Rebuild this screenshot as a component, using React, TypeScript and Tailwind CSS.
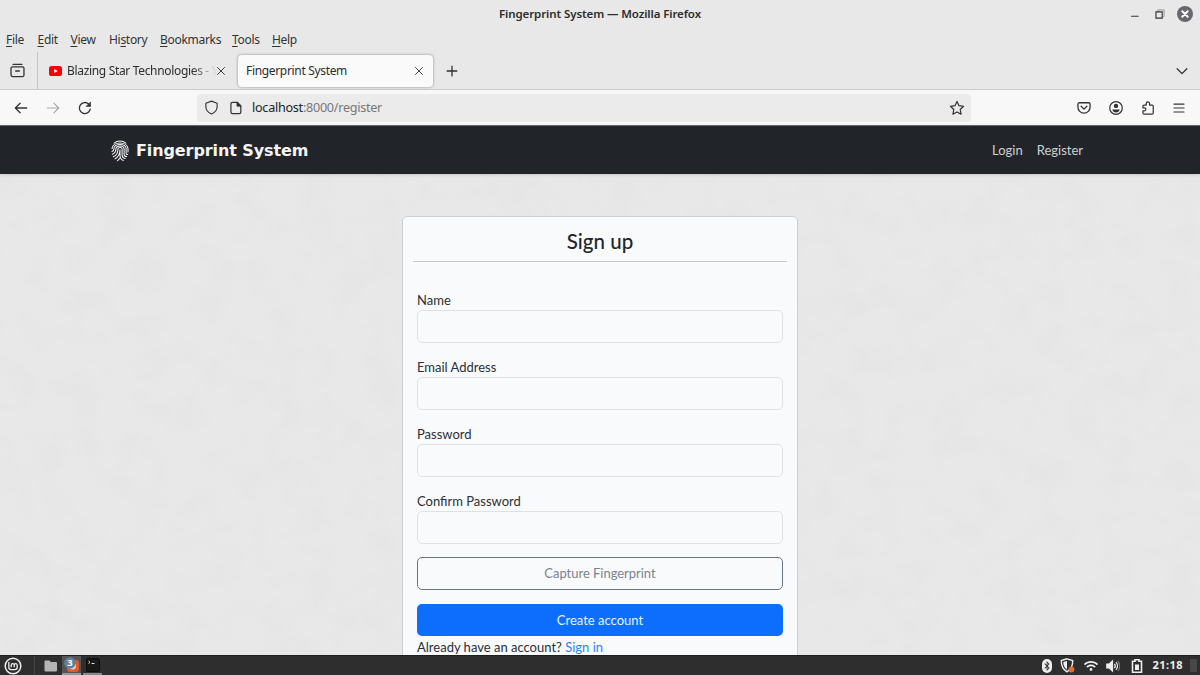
import type { ReactNode } from "react";
import { FaBluetoothB, FaWifi } from "react-icons/fa";

interface IconProps {
  size?: number;
  className?: string;
  children: ReactNode;
}

const Icon = ({ size = 16, className = "", children }: IconProps) => (
  <svg
    width={size}
    height={size}
    viewBox="0 0 16 16"
    fill="none"
    stroke="currentColor"
    strokeWidth="1.2"
    strokeLinecap="round"
    strokeLinejoin="round"
    className={`shrink-0 ${className}`}
  >
    {children}
  </svg>
);

const menuItems = [
  { before: "", key: "F", after: "ile", width: "w-[31.5px]" },
  { before: "", key: "E", after: "dit", width: "w-[33px]" },
  { before: "", key: "V", after: "iew", width: "w-[38.5px]" },
  { before: "Hi", key: "s", after: "tory", width: "w-[51px]" },
  { before: "", key: "B", after: "ookmarks", width: "w-[72px]" },
  { before: "", key: "T", after: "ools", width: "w-[40px]" },
  { before: "", key: "H", after: "elp", width: "w-[40px]" },
];

const TitleBar = () => (
  <div className="grid h-7 grid-cols-[1fr_auto_1fr] items-center">
    <span />
    <h1 className="text-[11.5px] font-semibold tracking-[-0.1px] text-[#2c2c2c]">
      Fingerprint System — Mozilla Firefox
    </h1>
    <div className="flex items-center justify-end gap-[13px] pr-[7px] text-[#333]">
      <Icon size={10}>
        <path d="M2.5 11.5h10.5" strokeWidth="1.8" />
      </Icon>
      <Icon size={10} className="ml-[2px]">
        <path d="M4.5 4V1.500h10V12H12" stroke="#999" strokeWidth="1.6" />
        <path d="M1.500 4.500h10v10h-10z" strokeWidth="1.8" strokeLinejoin="miter" />
      </Icon>
      <Icon size={16} className="-ml-px">
        <circle cx="8" cy="8" r="8" fill="#69696d" stroke="none" />
        <path d="M5.300 5.300l5.400 5.400M10.700 5.300l-5.400 5.400" stroke="white" strokeWidth="2" />
      </Icon>
    </div>
  </div>
);

const MenuBar = () => (
  <div className="flex h-6 items-center pl-[6px] text-[12px] text-[#333]">
    {menuItems.map((item) => (
      <span key={item.key + item.after} className={`whitespace-nowrap tracking-[-0.3px] ${item.width}`}>
        {item.before}
        <span className="underline underline-offset-2">{item.key}</span>
        {item.after}
      </span>
    ))}
  </div>
);

const CloseIcon = () => (
  <Icon size={8}>
    <path d="M1 1l14 14M15 1L1 15" strokeWidth="1.8" />
  </Icon>
);

const TabBar = () => (
  <div className="flex h-[38px] items-center border-b border-[#ccc] text-[12px] text-[#2d2d2d]">
    <div className="flex h-full w-[38px] items-center justify-center border-r border-[#c4c4c4] pr-[2px]">
      <Icon size={15} className="text-[#333]">
        <path d="M3.300 1.500h9.400M2.700 4.100h10.600a1.600 1.600 0 0 1 1.600 1.600v7.200a1.600 1.600 0 0 1-1.600 1.600H2.700a1.600 1.600 0 0 1-1.600-1.600V5.700a1.600 1.600 0 0 1 1.600-1.600zM6 8.500h4" strokeWidth="1.400" />
      </Icon>
    </div>
    <div className="flex h-full w-[200px] items-center pl-[11px]">
      <svg width="13" height="10" viewBox="0 0 13 10" className="shrink-0">
        <rect width="13" height="10" rx="2.600" fill="#f00" />
        <path d="M5.200 2.900v4.200L8.800 5z" fill="#fff" />
      </svg>
      <span className="ml-[5px] w-[150px] shrink-0 whitespace-nowrap tracking-[-0.33px] [mask-image:linear-gradient(to_right,black_125px,transparent_150px)]">
        Blazing Star Technologies - Y
      </span>
      <span>
        <CloseIcon />
      </span>
    </div>
    <div className="flex h-[32px] w-[195px] items-center justify-between rounded-[4px] bg-[#fafafa] pl-[8px] pr-[10px] shadow-[0_0_3px_rgba(0,0,0,0.4)]">
      <span className="tracking-[-0.33px]">Fingerprint System</span>
      <CloseIcon />
    </div>
    <Icon size={12} className="ml-[13px]">
      <path d="M8 1.500v13M1.500 8h13" strokeWidth="1.700" />
    </Icon>
    <Icon size={12} className="ml-auto mr-[12px]">
      <path d="M1.500 5L8 11.500 14.500 5" strokeWidth="1.600" />
    </Icon>
  </div>
);

const Toolbar = () => (
  <div className="flex h-[35px] items-center bg-[#f8f8f8] text-[#333]">
    <Icon size={14} className="ml-[14px]">
      <path d="M14.500 8h-13M7 2.500L1.500 8 7 13.500" strokeWidth="1.500" />
    </Icon>
    <Icon size={14} className="ml-[18px] text-[#aaa]">
      <path d="M1.500 8h13M9 2.500L14.500 8 9 13.500" strokeWidth="1.400" />
    </Icon>
    <Icon size={14} className="ml-[18px]">
      <path d="M14 9.400A6.300 6.300 0 1 1 12.200 3.500" strokeWidth="1.500" />
      <path d="M14.300 1.500v4.700H9.600z" fill="currentColor" strokeWidth=".8" />
    </Icon>
    <div className="ml-[105px] flex h-[28px] w-[774px] items-center rounded-[4px] bg-[#ebebeb] pl-[7px] pr-[6px]">
      <Icon size={15}>
        <path d="M8 1.200l6 2.200v3.800c0 3.800-3 6.400-6 7.700-3-1.300-6-3.900-6-7.700V3.400z" />
      </Icon>
      <Icon size={14} className="ml-[10px]">
        <path d="M3.800 1.500h5.700l4 4v7.400a1.600 1.600 0 0 1-1.600 1.600H3.800a1.600 1.600 0 0 1-1.600-1.600V3.100a1.600 1.600 0 0 1 1.600-1.600zM9.500 1.500v4h4z" strokeWidth="1.400" />
        <path d="M9.500 1.500v4h4z" fill="currentColor" />
      </Icon>
      <span className="ml-[9px] pt-px text-[12.6px] tracking-[-0.26px] text-[#222]">
        localhost<span className="text-[#777]">:8000/register</span>
      </span>
      <Icon size={16} className="ml-auto">
        <path d="M8 1.400l2 4.300 4.600.6-3.400 3.200.9 4.700L8 11.900l-4.100 2.300.9-4.700L1.400 6.300 6 5.700z" />
      </Icon>
    </div>
    <div className="ml-auto flex items-center gap-[18px] pr-[15px]">
      <Icon size={14}>
        <path d="M2.600 2h10.800a1.500 1.500 0 0 1 1.500 1.500V7a6.900 6.900 0 0 1-13.800 0V3.500A1.500 1.500 0 0 1 2.600 2zM4.700 6L8 9.300 11.300 6" strokeWidth="1.500" />
      </Icon>
      <Icon size={14}>
        <circle cx="8" cy="8" r="7.200" strokeWidth="1.400" />
        <circle cx="8" cy="5.600" r="2.500" fill="currentColor" stroke="none" />
        <path d="M3.700 9.600h8.600c-.6 2.200-2.200 3.400-4.300 3.400s-3.700-1.200-4.300-3.400z" fill="currentColor" stroke="none" />
      </Icon>
      <Icon size={14}>
        <path d="M3.500 15h9.200a1.300 1.300 0 0 0 1.300-1.300V6a1.300 1.300 0 0 0-1.300-1.300H9.800V2.900a1.900 1.900 0 0 0-3.800 0v1.800H3.500a1.300 1.300 0 0 0-1.300 1.300v1.800h1.700a1.700 1.700 0 0 1 0 3.400H2.200v2.500A1.300 1.300 0 0 0 3.500 15z" strokeWidth="1.400" />
      </Icon>
      <Icon size={12}>
        <path d="M1.300 2.700h13.400M1.300 8h13.400M1.300 13.300h13.400" strokeWidth="1.600" />
      </Icon>
    </div>
  </div>
);

const FingerprintLogo = () => (
  <svg
    width="18"
    height="22"
    viewBox="0 0 18 22"
    fill="none"
    stroke="#f4f4f4"
    strokeWidth="1.05"
    strokeLinecap="round"
    className="mt-px shrink-0"
  >
    <path d="M3.200 3.200C6.400.3 11.600.3 14.800 3.200" />
    <path d="M1 8.600C1.500 1 16.500 1 17 8.600V12" />
    <path d="M1 11.600c1.300-.6 1.900-1.400 1.900-2.900C2.900 3 15.100 3 15.100 8.700v4.800c0 .8.500 1 1.600 1" />
    <path d="M1.300 14.200C3.700 13.300 4.900 11.600 4.900 9 4.900 5 13.100 5 13.100 9v5.400c0 1.400.8 2 2.600 2.100" />
    <path d="M2.300 16.700C5.200 15.400 6.900 13 6.900 9.400c0-2.600 4.200-2.600 4.200 0v5.500c0 2 1.200 3.200 3.100 3.500" />
    <path d="M4 18.900c3.200-1.800 5-4.800 5-9.300v5.900c0 2.400 1.200 4.100 3.300 4.900" />
    <path d="M6.400 20.800c1.100-.8 1.900-1.600 2.500-2.700" />
  </svg>
);

const Navbar = () => (
  <nav className="relative flex h-[49px] items-center border-t border-[#62676b] bg-[#212529] pl-[111px] pr-[117px] shadow-[0_1px_3px_rgba(0,0,0,0.15)]">
    <FingerprintLogo />
    <span className="ml-[7px] pt-px font-['DejaVu_Sans'] text-[16px] font-bold tracking-[-0.1px] text-[#f4f4f4]">
      Fingerprint System
    </span>
    <div className="ml-auto flex gap-[14px] pt-px text-[13px] text-[#cfd0d1]">
      <a href="#login">Login</a>
      <a href="#register">Register</a>
    </div>
  </nav>
);

const PaperTexture = () => (
  <svg className="absolute inset-0 h-full w-full" aria-hidden="true">
    <filter id="paper" x="0" y="0" width="100%" height="100%">
      <feTurbulence type="fractalNoise" baseFrequency="0.03 0.035" numOctaves="3" seed="4" />
      <feColorMatrix values="0 0 0 0 0.35  0 0 0 0 0.35  0 0 0 0 0.35  0.09 0 0 0 -0.039" />
    </filter>
    <rect width="100%" height="100%" filter="url(#paper)" />
  </svg>
);

const fields = ["Name", "Email Address", "Password", "Confirm Password"];

const SignUpCard = () => (
  <div className="relative h-[500px] w-[396px] rounded-[5px] border border-[#cdcfd2] bg-[#f9fafc] px-[10px] text-[#2b3035]">
    <h2 className="flex h-[45px] items-center justify-center border-b border-[#c8cacd] pt-[5px] text-[20.5px] font-medium text-[#212529]">
      Sign up
    </h2>
    <form className="px-[4px] pt-[28px] text-[13px]">
      {fields.map((field) => (
        <label key={field} className="mb-[14.500px] block">
          <span className="block h-[20px] leading-[20px]">{field}</span>
          <input className="block h-[32.500px] w-full rounded-[5px] border border-[#dee2e6] bg-[#f8fafc]" />
        </label>
      ))}
      <button
        type="button"
        className="-mt-px block h-[33px] w-full rounded-[5px] border border-[#6c757d] pt-px tracking-[-0.03px] text-[#7b838a]"
      >
        Capture Fingerprint
      </button>
      <button
        type="button"
        className="mt-[14px] block h-[32px] w-full rounded-[5px] bg-[#0d6efd] pt-px text-[#e8f1ff]"
      >
        Create account
      </button>
      <p className="leading-[22px]">
        Already have an account?{" "}
        <a href="#login" className="text-[#2f80f5]">
          Sign in
        </a>
      </p>
    </form>
  </div>
);

const Taskbar = () => (
  <div className="flex h-[20px] items-center border-t border-[#1e1e1e] bg-[#2e2e2e] text-[#eee]">
    <svg width="18" height="18" viewBox="0 0 18 18" fill="none" stroke="currentColor" className="ml-[4px]">
      <circle cx="9" cy="9" r="7.800" strokeWidth="1.500" />
      <path d="M4.800 5v5.200a2.400 2.400 0 0 0 2.400 2.400h3.600a2.400 2.400 0 0 0 2.400-2.400V8.200a1.500 1.500 0 0 0-3 0v2M10.200 8.200a1.500 1.500 0 0 0-3 0v2" strokeWidth="1.300" />
    </svg>
    <span className="ml-[12px] h-full w-px bg-[#444]" />
    <svg width="14" height="12" viewBox="0 0 14 12" className="ml-[9px]">
      <path d="M1 .5h4.500l1.200 1.600H12a1 1 0 0 1 1 1V10.500a1 1 0 0 1-1 1H1.500a1 1 0 0 1-1-1V1z" fill="#b4b4b4" />
    </svg>
    <div className="ml-[4px] flex h-full w-[19px] items-center justify-center border-b-2 border-[#999] bg-[#555]">
      <svg width="15" height="16" viewBox="0 0 15 16">
        <rect x="3" y="3" width="12" height="12" rx="3" fill="#e2592b" />
        <circle cx="8.500" cy="9" r="3.500" fill="#f2d9c8" />
        <circle cx="6" cy="6" r="5.800" fill="#62809e" />
        <text x="6" y="9.300" textAnchor="middle" fontSize="9.500" fontWeight="700" fill="#fff">
          3
        </text>
      </svg>
    </div>
    <div className="ml-[2px] flex h-full w-[19px] items-center justify-center border-b-2 border-[#888]">
      <svg width="14" height="14" viewBox="0 0 14 14">
        <rect x=".5" y=".5" width="13" height="13" rx="1.500" fill="#191919" stroke="#0c0c0c" />
        <path d="M2.500 3l1.500 1.300L2.500 5.500M5.500 5.500h3" fill="none" stroke="#ddd" />
      </svg>
    </div>
    <div className="ml-auto flex items-center">
      <span className="flex h-[14px] w-[10px] items-center justify-center rounded-full bg-[#eee] text-[#2e2e2e]">
        <FaBluetoothB size={10} />
      </span>
      <svg width="15" height="15" viewBox="0 0 15 15" className="ml-[8px]">
        <path d="M7 .8l5.700 1.700c.2 5-1.500 8.800-5.700 11.300C2.800 11.300 1.100 7.500 1.300 2.500z" fill="none" stroke="#eee" strokeWidth="1.400" />
        <path d="M7 3v8.700C4.300 9.700 3.200 7.300 3.300 4z" fill="#eee" />
        <circle cx="11.500" cy="11.500" r="2.900" fill="#e86b30" />
      </svg>
      <FaWifi size={14} className="ml-[9px]" />
      <svg width="14" height="14" viewBox="0 0 14 14" fill="none" stroke="currentColor" strokeWidth="1.200" className="ml-[8px]">
        <path d="M.8 5h2.500L6.500 2v10L3.300 9H.8z" fill="currentColor" />
        <path d="M8.300 4.800a3.200 3.200 0 0 1 0 4.400M10 3.200a5.500 5.500 0 0 1 0 7.600" />
        <path d="M11.700 1.800a7.500 7.500 0 0 1 0 10.400" stroke="#777" />
      </svg>
      <svg width="12" height="14" viewBox="0 0 12 14" className="ml-[11px]">
        <path d="M4 .8h4v1.400h2.500v11H1.500v-11H4z" fill="none" stroke="#eee" strokeWidth="1.600" />
        <path d="M4 5.500h4V11H4z" fill="#eee" />
      </svg>
      <span className="ml-[9px] font-['Noto_Sans'] text-[11px] font-bold tracking-[0.45px]">21:18</span>
      <span className="ml-[7px] mr-[3px] h-[13px] w-[7px] bg-[#484848]" />
    </div>
  </div>
);

const App = () => {
  return (
    <div className="flex h-[675px] w-[1200px] flex-col overflow-hidden bg-[#e8e8e8] font-['Noto_Sans',sans-serif]">
      <TitleBar />
      <MenuBar />
      <TabBar />
      <Toolbar />
      <div className="flex min-h-0 flex-1 flex-col font-['Lato',sans-serif]">
        <Navbar />
        <main className="relative flex min-h-0 flex-1 justify-center overflow-hidden pt-[42px]">
          <PaperTexture />
          <SignUpCard />
        </main>
      </div>
      <Taskbar />
    </div>
  );
};

export default App;
